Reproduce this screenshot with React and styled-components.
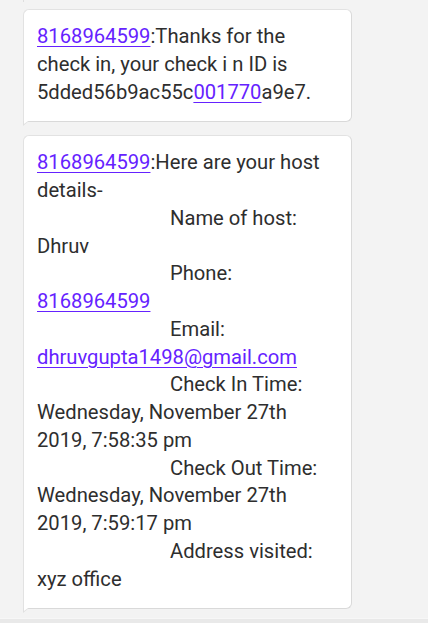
import React from "react";
import styled, { createGlobalStyle } from "styled-components";

const Global = createGlobalStyle`
  html, body { margin: 0; padding: 0; background: #f3f3f3; }
  body { font-family: Roboto, "Noto Sans", Arial, sans-serif; }
`;

const Page = styled.div`
  width: 428px;
  height: 623px;
  display: flex;
  flex-direction: column;
  background: #f3f3f3;
  overflow: hidden;
`;

const Thread = styled.div`
  flex: 1;
  display: flex;
  flex-direction: column;
  gap: 13px;
  padding: 0 0 0 23px;
`;

const PrevTail = styled.div`
  width: 8px;
  height: 9px;
  margin-bottom: -13px;
  position: relative;
  &::before {
    content: "";
    position: absolute;
    left: 0;
    top: 0;
    width: 1px;
    height: 2px;
    background: #dedede;
  }
`;

const Bubble = styled.div`
  position: relative;
  width: 329px;
  box-sizing: border-box;
  background: #fff;
  border: 1px solid #e2e2e2;
  border-right-color: #d9d9d9;
  border-bottom-color: #d9d9d9;
  border-radius: 6px 6px 6px 0;
  padding: 13px 24px 15px 13px;
  color: #2e2e2e;
  font-size: 20.2px;
  line-height: 27.75px;
  &::after {
    content: "";
    position: absolute;
    left: -1px;
    bottom: -5px;
    width: 0;
    height: 0;
    border-left: 6px solid #e0e0e0;
    border-bottom: 5px solid transparent;
  }
  &::before {
    content: "";
    position: absolute;
    left: 0;
    bottom: -3px;
    width: 0;
    height: 0;
    border-left: 4px solid #fff;
    border-bottom: 3px solid transparent;
    z-index: 1;
  }
`;

const Link = styled.span`
  color: #6522ff;
  text-decoration: underline;
  text-decoration-thickness: 1px;
  text-underline-offset: 3px;
`;

const Line = styled.div`
  padding-left: ${(p) => (p.$indent ? "133px" : "0")};
`;

const Footer = styled.div`
  height: 4px;
  background: #e9e9e9;
  border-top: 1px solid #f7f7f7;
`;

const rows = [
  ["Name of host:", "Dhruv", false],
  ["Phone:", "8168964599", true],
  ["Email:", "dhruvgupta1498@gmail.com", true],
  ["Check In Time:", "Wednesday, November 27th 2019, 7:58:35 pm", false],
  ["Check Out Time:", "Wednesday, November 27th 2019, 7:59:17 pm", false],
  ["Address visited:", "xyz office", false],
];

export default function App() {
  return (
    <>
      <Global />
      <Page>
        <Thread>
          <PrevTail />
          <Bubble>
            <Link>8168964599</Link>:Thanks for the check in, your check i n ID is
            5dded56b9ac55c<Link>001770</Link>a9e7.
          </Bubble>
          <Bubble>
            <Line>
              <Link>8168964599</Link>:Here are your host details-
            </Line>
            {rows.map(([label, value, link]) => (
              <React.Fragment key={label}>
                <Line $indent>{label}</Line>
                <Line>{link ? <Link>{value}</Link> : value}</Line>
              </React.Fragment>
            ))}
          </Bubble>
        </Thread>
        <Footer />
      </Page>
    </>
  );
}
